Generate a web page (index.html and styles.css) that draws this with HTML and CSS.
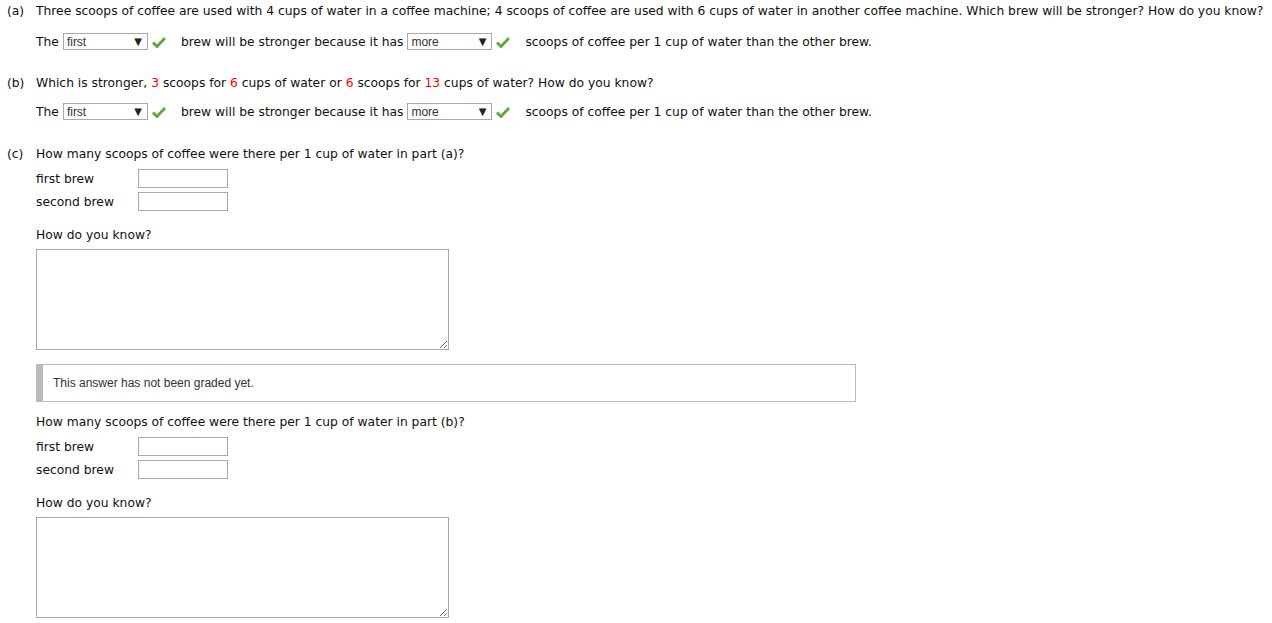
FILE: index.html
```html
<!DOCTYPE html>
<html lang="en">
<head>
    <meta charset="UTF-8">
    <title>Coffee Brew Question</title>
    <link rel="stylesheet" href="styles.css">
</head>
<body>
    <div class="part part-a">
        <span class="label">(a)</span>
        <div class="part-body">
            <p class="question">Three scoops of coffee are used with 4 cups of water in a coffee machine; 4 scoops of coffee are used with 6 cups of water in another coffee machine. Which brew will be stronger? How do you know?</p>
            <div class="answer">
                <span>The</span>
                <span class="select select-first"><span class="value">first</span><span class="arrow">&#9660;</span></span>
                <svg class="check" width="14" height="12" viewBox="0 0 14 12"><path d="M1 6.5 L5 10.5 L13 2" fill="none" stroke="#5aa83f" stroke-width="2.8"/></svg>
                <span class="after">brew will be stronger because it has</span>
                <span class="select select-more"><span class="value">more</span><span class="arrow">&#9660;</span></span>
                <svg class="check" width="14" height="12" viewBox="0 0 14 12"><path d="M1 6.5 L5 10.5 L13 2" fill="none" stroke="#5aa83f" stroke-width="2.8"/></svg>
                <span class="after">scoops of coffee per 1 cup of water than the other brew.</span>
            </div>
        </div>
    </div>

    <div class="part part-b">
        <span class="label">(b)</span>
        <div class="part-body">
            <p class="question">Which is stronger, <span class="num">3</span> scoops for <span class="num">6</span> cups of water or <span class="num">6</span> scoops for <span class="num">13</span> cups of water? How do you know?</p>
            <div class="answer">
                <span>The</span>
                <span class="select select-first"><span class="value">first</span><span class="arrow">&#9660;</span></span>
                <svg class="check" width="14" height="12" viewBox="0 0 14 12"><path d="M1 6.5 L5 10.5 L13 2" fill="none" stroke="#5aa83f" stroke-width="2.8"/></svg>
                <span class="after">brew will be stronger because it has</span>
                <span class="select select-more"><span class="value">more</span><span class="arrow">&#9660;</span></span>
                <svg class="check" width="14" height="12" viewBox="0 0 14 12"><path d="M1 6.5 L5 10.5 L13 2" fill="none" stroke="#5aa83f" stroke-width="2.8"/></svg>
                <span class="after">scoops of coffee per 1 cup of water than the other brew.</span>
            </div>
        </div>
    </div>

    <div class="part part-c">
        <span class="label">(c)</span>
        <div class="part-body">
            <p class="question">How many scoops of coffee were there per 1 cup of water in part (a)?</p>
            <div class="fields">
                <div class="field"><span class="field-label">first brew</span><input type="text" class="box"></div>
                <div class="field"><span class="field-label">second brew</span><input type="text" class="box"></div>
            </div>
            <p class="know">How do you know?</p>
            <textarea class="explain"></textarea>
            <div class="grade">This answer has not been graded yet.</div>

            <p class="question question-2">How many scoops of coffee were there per 1 cup of water in part (b)?</p>
            <div class="fields">
                <div class="field"><span class="field-label">first brew</span><input type="text" class="box"></div>
                <div class="field"><span class="field-label">second brew</span><input type="text" class="box"></div>
            </div>
            <p class="know">How do you know?</p>
            <textarea class="explain"></textarea>
        </div>
    </div>
</body>
</html>
```

FILE: styles.css
```css
*{
    margin: 0;
    padding: 0;
    box-sizing: border-box;
}
body{
    font-family: "DejaVu Sans", Verdana, sans-serif;
    font-size: 12.3px;
    line-height: 16px;
    color: #111;
    background-color: #fff;
    padding: 3px 0 0 7px;
}
.part{
    display: flex;
}
.label{
    width: 29px;
    flex-shrink: 0;
}
.part-body{
    flex: 1;
}
.question{
    white-space: nowrap;
}
.part-b{
    margin-top: 25px;
}
.part-c{
    margin-top: 26px;
}
.answer{
    display: flex;
    align-items: center;
    margin-top: 14px;
    height: 17px;
}
.part-b .answer{
    margin-top: 12px;
}
.select{
    display: inline-flex;
    align-items: center;
    justify-content: space-between;
    height: 17px;
    width: 85px;
    margin-left: 4px;
    padding: 0 5px 0 3px;
    border: 1px solid #a9a9a9;
    font-family: "Liberation Sans", Arial, sans-serif;
    font-size: 12px;
    color: #333;
    background-color: #fff;
}
.select .arrow{
    font-family: "DejaVu Sans", sans-serif;
    font-size: 10px;
    color: #222;
}
.check{
    margin-left: 4px;
}
.after{
    margin-left: 15px;
}
.select-more{
    margin-left: 4px;
}
.num{
    color: #f00;
}
.fields{
    margin-top: 7px;
    display: flex;
    flex-direction: column;
    gap: 4px;
}
.field{
    display: flex;
    align-items: center;
}
.field-label{
    width: 102px;
}
.box{
    width: 90px;
    height: 19px;
    border: 1px solid #a9a9a9;
    outline: none;
}
.know{
    margin-top: 16px;
}
.explain{
    display: block;
    margin-top: 6px;
    width: 413px;
    height: 101px;
    border: 1px solid #a9a9a9;
    resize: vertical;
    outline: none;
}
.grade{
    margin-top: 14px;
    width: 820px;
    height: 38px;
    border: 1px solid #bbb;
    border-left: 7px solid #bbb;
    padding-left: 10px;
    display: flex;
    align-items: center;
    font-family: "Liberation Sans", Arial, sans-serif;
    font-size: 12px;
    color: #333;
}
.question-2{
    margin-top: 12px;
}
```
